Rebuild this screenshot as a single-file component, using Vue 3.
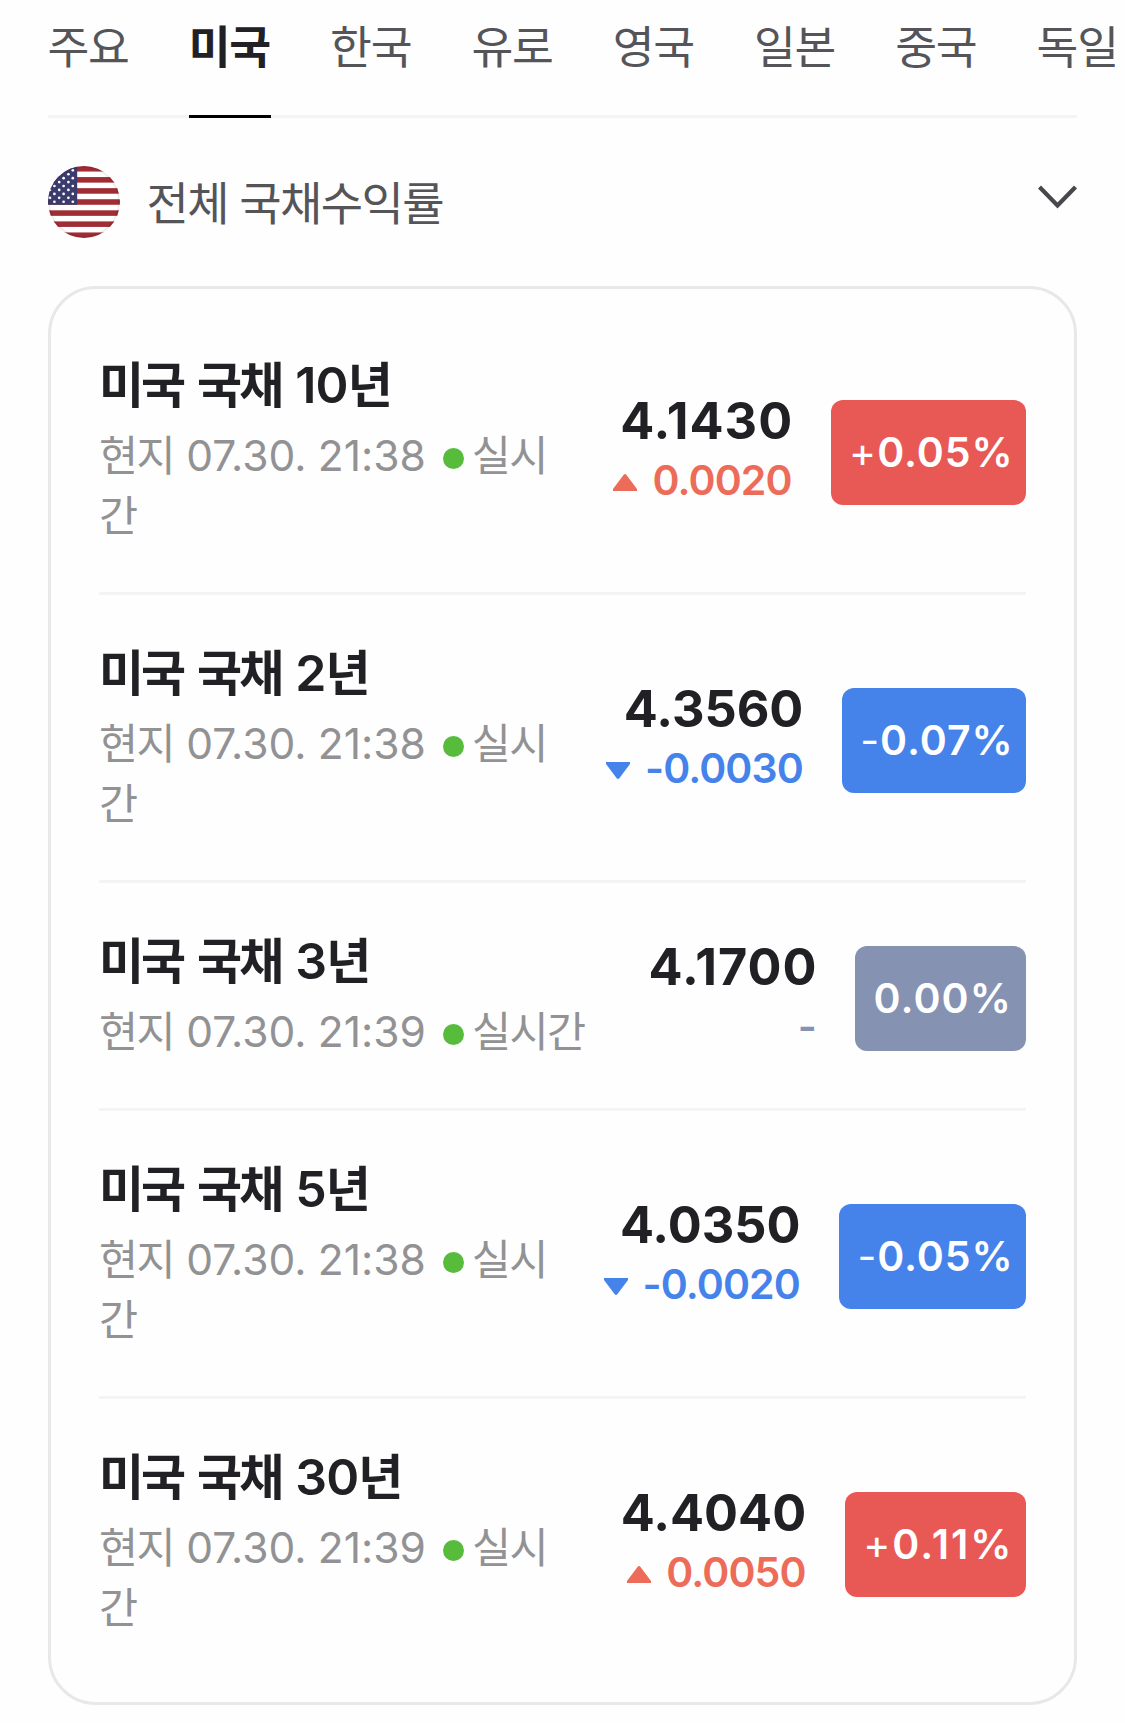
<script setup>
const tabs = ['주요', '미국', '한국', '유로', '영국', '일본', '중국', '독일']
const activeTab = '미국'

const bonds = [
  { term: '10', time: '21:38', price: '4.1430', diff: '0.0020', sign: '+', rate: '0.05%', trend: 'up' },
  { term: '2', time: '21:38', price: '4.3560', diff: '-0.0030', sign: '-', rate: '0.07%', trend: 'down' },
  { term: '3', time: '21:39', price: '4.1700', diff: '-', sign: '', rate: '0.00%', trend: 'flat' },
  { term: '5', time: '21:38', price: '4.0350', diff: '-0.0020', sign: '-', rate: '0.05%', trend: 'down' },
  { term: '30', time: '21:39', price: '4.4040', diff: '0.0050', sign: '+', rate: '0.11%', trend: 'up' },
]

const hasOne = (text) => text.includes('1')

const stars = []
for (let row = 0; row < 9; row++) {
  for (let col = 0; col < 3; col++) {
    stars.push({ x: (row % 2 ? 2 : 6.4) + col * 9.2, y: 4.3 + row * 3.93 })
  }
}
</script>

<template>
  <main class="page">
    <nav class="tabs">
      <a v-for="tab in tabs" :key="tab" class="tab" :class="{ active: tab === activeTab }">{{ tab }}</a>
    </nav>

    <header class="filter">
      <svg class="flag" viewBox="0 0 72 72" aria-hidden="true">
        <defs>
          <clipPath id="flag-clip"><circle cx="36" cy="36" r="36" /></clipPath>
        </defs>
        <g clip-path="url(#flag-clip)">
          <rect width="72" height="72" fill="#fff" />
          <rect v-for="n in 7" :key="n" x="0" :y="(n - 1) * 11.077" width="72" height="5.54" fill="#a02c34" />
          <rect width="29.2" height="38.77" fill="#3c3b6e" />
          <circle v-for="(s, i) in stars" :key="i" :cx="s.x" :cy="s.y" r="1.35" fill="#fff" />
          <circle cx="36" cy="36" r="35" fill="none" stroke="#000" stroke-opacity=".07" stroke-width="2" />
        </g>
      </svg>
      <h1 class="filter-title">전체 국채수익률</h1>
      <svg class="chevron" viewBox="0 0 39 24" aria-hidden="true">
        <path d="M1.5 2 19.5 20.5 37.5 2" fill="none" stroke="#47474c" stroke-width="4.2" />
      </svg>
    </header>

    <ul class="card">
      <li v-for="bond in bonds" :key="bond.term" class="row">
        <div class="info">
          <strong class="name">미국 국채 <span class="term">{{ bond.term }}</span>년</strong>
          <p class="meta">현지 <span class="num">07.30. {{ bond.time }}</span><i class="dot"></i>실시간</p>
        </div>
        <div class="quote" :class="bond.trend">
          <span class="price" :class="{ loose: hasOne(bond.price) }">{{ bond.price }}</span>
          <span class="diff">
            <svg v-if="bond.trend === 'up'" class="arrow" viewBox="0 0 24 17"><path d="M0 17V15L10.5 1Q12-.8 13.5 1L24 15V17Z" /></svg>
            <svg v-if="bond.trend === 'down'" class="arrow" viewBox="0 0 24 17"><path d="M0 0V2L10.5 16Q12 17.8 13.5 16L24 2V0Z" /></svg>
            {{ bond.diff }}
          </span>
        </div>
        <span class="badge" :class="[bond.trend, { loose: hasOne(bond.rate) }]"><span v-if="bond.sign" class="sign">{{ bond.sign }}</span>{{ bond.rate }}</span>
      </li>
    </ul>
  </main>
</template>

<style>
body {
  background: #fefefe;
  overflow: hidden;
}
</style>

<style scoped>
.page {
  box-sizing: border-box;
  width: 1125px;
  height: 1723px;
  padding: 0 48px;
  font-family: Inter, "Noto Sans CJK KR", sans-serif;
  color: #212125;
}
.tabs {
  display: flex;
  gap: 59.3px;
  height: 115px;
  border-bottom: 3px solid #f4f4f5;
}
.tab {
  flex: none;
  box-sizing: border-box;
  width: 82px;
  height: 118px;
  font-size: 45.5px;
  line-height: 96px;
  letter-spacing: -1.3px;
  text-indent: -0.5px;
  white-space: nowrap;
  color: #555559;
}
.tab.active {
  font-weight: 700;
  color: #212125;
  border-bottom: 3px solid #000;
}
.filter {
  display: flex;
  align-items: center;
  height: 168px;
}
.flag {
  width: 72px;
  height: 72px;
}
.filter-title {
  margin: 2px 0 0 26.5px;
  font-size: 46px;
  font-weight: 400;
  line-height: 60px;
  letter-spacing: -1.6px;
  color: #555559;
}
.chevron {
  width: 39px;
  height: 24px;
  margin: 0 0 11px auto;
}
.card {
  box-sizing: border-box;
  width: 1029px;
  height: 1419px;
  margin: 0;
  padding: 18px 48px 0;
  list-style: none;
  border: 3px solid #e8e8ea;
  border-radius: 48px;
}
.row {
  display: flex;
  align-items: center;
  padding: 53px 0 47px;
}
.row:not(:last-child) {
  border-bottom: 3px solid #f4f4f6;
}
.info {
  flex: 1;
  min-width: 0;
  margin-right: 48px;
}
.name {
  display: block;
  box-sizing: border-box;
  height: 50px;
  padding-top: 1px;
  font-size: 49px;
  font-weight: 700;
  line-height: 48px;
  letter-spacing: -3px;
  word-spacing: 5.3px;
  white-space: nowrap;
}
.term {
  font-size: 50px;
  font-weight: 600;
  letter-spacing: -0.8px;
}
.meta {
  margin: 15.5px 0 -0.5px;
  font-size: 42.5px;
  line-height: 60px;
  letter-spacing: -1.6px;
  word-spacing: 2px;
  word-break: break-all;
  color: #929294;
}
.num {
  letter-spacing: 0;
  word-spacing: -0.5px;
}
.dot {
  display: inline-block;
  width: 21px;
  height: 21px;
  margin: 0 8px 0 17px;
  border-radius: 50%;
  background: #57bb3b;
  vertical-align: 2px;
}
.quote {
  display: flex;
  flex-direction: column;
  align-items: flex-end;
  height: 105px;
  margin-right: 39px;
}
.price {
  padding-top: 1px;
  font-size: 50.4px;
  font-weight: 700;
  line-height: 39px;
}
.price.loose {
  margin-right: -1px;
  letter-spacing: 1px;
}
.diff {
  display: flex;
  align-items: center;
  margin: 20px 0.5px 0 0;
  font-size: 41px;
  font-weight: 600;
  line-height: 40px;
  letter-spacing: -0.9px;
}
.quote.up .diff { color: #ed6c59; }
.quote.down .diff { color: #4583eb; }
.quote.flat .diff { color: #8592b2; }
.arrow {
  width: 24px;
  height: 17px;
  margin: 5px 15px 0 0;
  fill: currentColor;
}
.badge {
  box-sizing: border-box;
  height: 105px;
  padding: 0 12.5px 0 18px;
  border-radius: 12px;
  font-size: 41px;
  font-weight: 600;
  line-height: 105px;
  letter-spacing: 0.9px;
  white-space: nowrap;
  color: #fff;
}
.badge.loose { letter-spacing: 2px; }
.badge.up { background: #e85955; }
.badge.down { background: #4583eb; }
.badge.flat {
  padding-right: 14px;
  letter-spacing: 1.1px;
  background: #8592b2;
}
.sign {
  font-weight: 400;
}
</style>
